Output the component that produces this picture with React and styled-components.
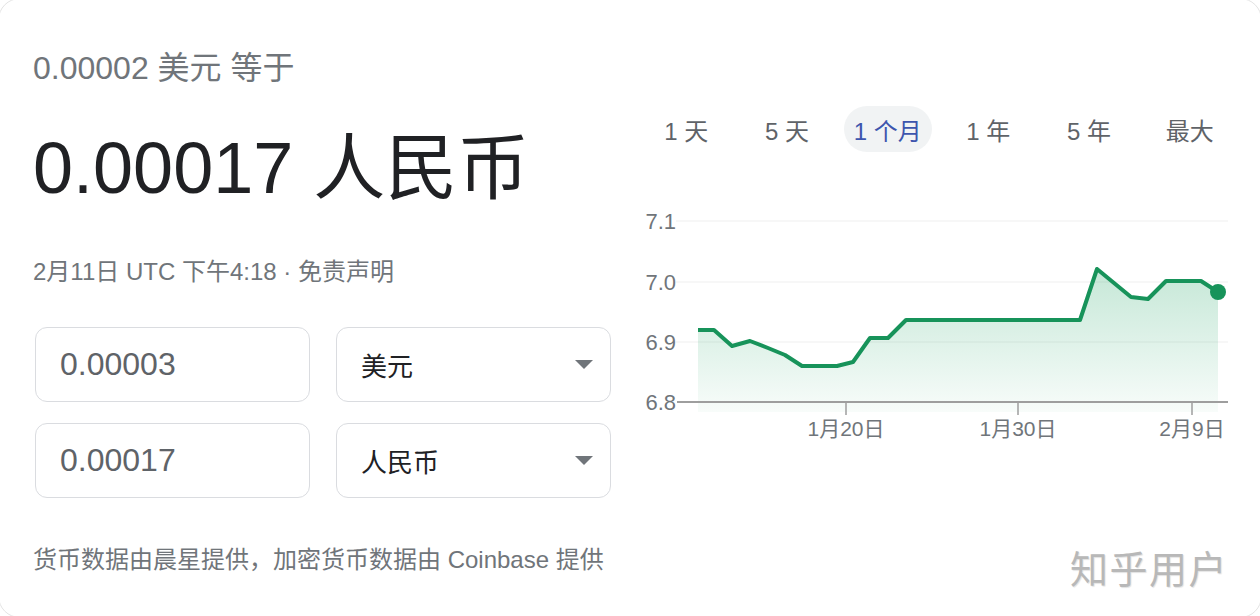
import { createGlobalStyle } from "styled-components";
import styled from "styled-components";

const GlobalStyle = createGlobalStyle`
  html, body {
    margin: 0;
    padding: 0;
    background: #ffffff;
    overflow: hidden;
  }
  body {
    font-family: "Liberation Sans", Arial, "Noto Sans CJK SC", sans-serif;
  }
`;

const Card = styled.div`
  position: relative;
  box-sizing: border-box;
  width: 1264px;
  height: 620px;
  margin: -2px 0 0 -2px;
  border: 1px solid #e4e4e4;
  border-radius: 22px;
  background: #fff;
  display: flex;
  gap: 24px;
  padding: 51px 0 0 34px;
`;

const LeftCol = styled.div`
  width: 579px;
  display: flex;
  flex-direction: column;
`;

const Subtitle = styled.div`
  font-size: 32px;
  line-height: 36px;
  color: #70757a;
  white-space: nowrap;
`;

const Result = styled.div`
  margin-top: 42px;
  font-size: 72px;
  line-height: 80px;
  color: #202124;
  white-space: nowrap;
`;

const DateLine = styled.div`
  margin-top: 49px;
  font-size: 24px;
  line-height: 30px;
  color: #70757a;
  white-space: nowrap;
`;

const FieldGrid = styled.div`
  margin: 40px 0 0 2px;
  display: grid;
  grid-template-columns: 275px 275px;
  column-gap: 26px;
  row-gap: 21px;
`;

const Field = styled.div`
  box-sizing: border-box;
  height: 75px;
  border: 1px solid #dadce0;
  border-radius: 12px;
  display: flex;
  align-items: center;
  justify-content: space-between;
  padding: 0 17px 0 24px;
  font-size: ${(p) => (p.$select ? "26px" : "32px")};
  color: ${(p) => (p.$select ? "#202124" : "#5f6368")};
`;

const Caret = styled.span`
  width: 0;
  height: 0;
  border-left: 9px solid transparent;
  border-right: 9px solid transparent;
  border-top: 9px solid #70757a;
`;

const Footer = styled.div`
  margin-top: 46px;
  font-size: 24px;
  line-height: 32px;
  color: #70757a;
  white-space: nowrap;
`;

const RightCol = styled.div`
  width: 604px;
  display: flex;
  flex-direction: column;
`;

const Tabs = styled.div`
  margin-top: 56px;
  display: grid;
  grid-template-columns: repeat(6, 1fr);
  justify-items: center;
`;

const Tab = styled.div`
  height: 46px;
  padding: 0 10px;
  border-radius: 23px;
  display: flex;
  align-items: center;
  font-size: 24px;
  white-space: nowrap;
  color: ${(p) => (p.$active ? "#3d55ad" : "#5f6368")};
  background: ${(p) => (p.$active ? "#f1f3f4" : "transparent")};
`;

const Chart = styled.svg`
  margin-top: 47px;
  display: block;
  font-family: "Liberation Sans", Arial, "Noto Sans CJK SC", sans-serif;
`;

const Watermark = styled.div`
  position: absolute;
  right: 33px;
  bottom: 26px;
  font-size: 38px;
  line-height: 42px;
  color: #b8b8b8;
  letter-spacing: 1.5px;
  text-shadow: 1px 1px 1px rgba(0, 0, 0, 0.12);
`;

const tabs = ["1 天", "5 天", "1 个月", "1 年", "5 年", "最大"];

const points = [
  [62, 131], [78, 131], [96, 147], [114, 142], [132, 149], [149, 156],
  [166, 167], [201, 167], [217, 163], [234, 139], [252, 139], [270, 121],
  [444, 121], [461, 70], [495, 98], [512, 100], [530, 82], [565, 82],
  [582, 93],
];

const yLabels = [
  { v: "7.1", y: 22 },
  { v: "7.0", y: 83 },
  { v: "6.9", y: 143 },
  { v: "6.8", y: 203 },
];

const xLabels = [
  { v: "1月20日", x: 210 },
  { v: "1月30日", x: 382 },
  { v: "2月9日", x: 556 },
];

const RateChart = () => {
  const line = points.map((p) => p.join(",")).join(" ");
  const last = points[points.length - 1];
  const area = `M${points[0][0]},213 L${line.replace(/ /g, " L")} L${last[0]},213 Z`;

  return (
    <Chart width="604" height="250" viewBox="0 0 604 250">
      <defs>
        <linearGradient id="fill" x1="0" y1="0" x2="0" y2="1">
          <stop offset="0" stopColor="#0f9d58" stopOpacity="0.24" />
          <stop offset="1" stopColor="#0f9d58" stopOpacity="0.03" />
        </linearGradient>
      </defs>
      {yLabels.slice(0, 3).map((l) => (
        <line key={l.v} x1="40" x2="592" y1={l.y} y2={l.y} stroke="#efefef" strokeWidth="1" />
      ))}
      <path d={area} fill="url(#fill)" />
      <line x1="41" x2="592" y1="203" y2="203" stroke="#9e9e9e" strokeWidth="2" />
      {xLabels.map((l) => (
        <line key={l.v} x1={l.x} x2={l.x} y1="203" y2="216" stroke="#9e9e9e" strokeWidth="1.5" />
      ))}
      <polyline
        points={line}
        fill="none"
        stroke="#17935a"
        strokeWidth="4"
        strokeLinejoin="round"
      />
      <circle cx={last[0]} cy={last[1]} r="8" fill="#17935a" />
      {yLabels.map((l) => (
        <text key={l.v} x="40" y={l.y + 8} fontSize="22" fill="#70757a" textAnchor="end">
          {l.v}
        </text>
      ))}
      {xLabels.map((l) => (
        <text key={l.v} x={l.x} y="237" fontSize="21" fill="#70757a" textAnchor="middle">
          {l.v}
        </text>
      ))}
    </Chart>
  );
};

export default function App() {
  return (
    <>
      <GlobalStyle />
      <Card>
        <LeftCol>
          <Subtitle>0.00002 美元 等于</Subtitle>
          <Result>0.00017 人民币</Result>
          <DateLine>2月11日 UTC 下午4:18 · 免责声明</DateLine>
          <FieldGrid>
            <Field>0.00003</Field>
            <Field $select>
              美元
              <Caret />
            </Field>
            <Field>0.00017</Field>
            <Field $select>
              人民币
              <Caret />
            </Field>
          </FieldGrid>
          <Footer>货币数据由晨星提供，加密货币数据由 Coinbase 提供</Footer>
        </LeftCol>
        <RightCol>
          <Tabs>
            {tabs.map((t) => (
              <Tab key={t} $active={t === "1 个月"}>
                {t}
              </Tab>
            ))}
          </Tabs>
          <RateChart />
        </RightCol>
        <Watermark>知乎用户</Watermark>
      </Card>
    </>
  );
}
